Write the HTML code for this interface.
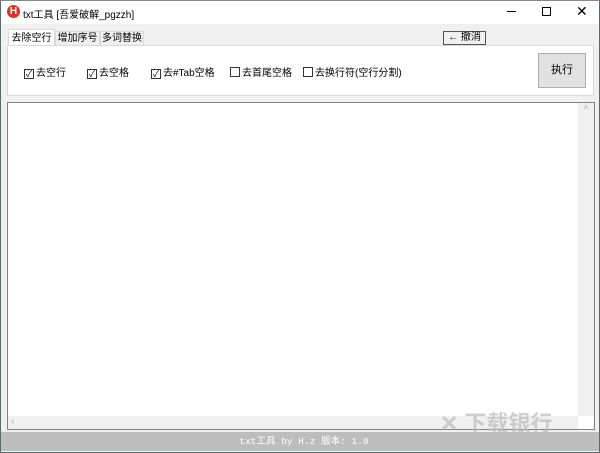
<!DOCTYPE html><html><head><meta charset="utf-8"><style>
*{margin:0;padding:0;box-sizing:border-box}
body{width:600px;height:453px;overflow:hidden;background:#f0f0f0;font-family:"Liberation Sans","Noto Sans CJK SC",sans-serif;font-size:10px;color:#000;position:relative}
.a{position:absolute;white-space:nowrap}
.cb{display:inline-block;width:10px;height:10px;border:1px solid #333;vertical-align:-1px;margin-right:2px;font-size:9px;line-height:8px;text-align:center}
</style></head><body>
<div class="a" style="left:0;top:0;width:600px;height:453px;border:1px solid #5a6a6a;border-top-color:#888"></div>
<div class="a" style="left:1px;top:1px;width:598px;height:23px;background:#fff"></div>
<div class="a" style="left:7px;top:5px;width:13px;height:13px;border-radius:50%;background:#d9342b;color:#fff;font-weight:bold;font-size:10px;text-align:center;line-height:13px">H</div>
<div class="a" style="left:23px;top:6px;font-size:10px">txt工具 [吾爱破解_pgzzh]</div>
<div class="a" style="left:507px;top:11px;width:9px;height:1px;background:#000"></div>
<div class="a" style="left:542px;top:7px;width:9px;height:9px;border:1px solid #000"></div>
<div class="a" style="left:576px;top:3px;font-size:14px">✕</div>
<div class="a" style="left:8px;top:29px;width:47px;height:17px;background:#fff;border:1px solid #d9d9d9;border-bottom:none;text-align:center;line-height:17px">去除空行</div>
<div class="a" style="left:55px;top:31px;width:45px;height:15px;border:1px solid #d9d9d9;text-align:center;line-height:14px">增加序号</div>
<div class="a" style="left:100px;top:31px;width:44px;height:15px;border:1px solid #d9d9d9;text-align:center;line-height:14px">多词替换</div>
<div class="a" style="left:443px;top:31px;width:43px;height:14px;border:1px solid #555;background:#f0f0f0;text-align:center;line-height:12px;font-size:10px">← 撤消</div>
<div class="a" style="left:7px;top:45px;width:587px;height:51px;background:#fff;border:1px solid #d9d9d9"></div>
<div class="a" style="left:24px;top:64px"><span class="cb">✓</span>去空行</div>
<div class="a" style="left:87px;top:64px"><span class="cb">✓</span>去空格</div>
<div class="a" style="left:151px;top:64px"><span class="cb">✓</span>去#Tab空格</div>
<div class="a" style="left:230px;top:64px"><span class="cb"></span>去首尾空格</div>
<div class="a" style="left:303px;top:64px"><span class="cb"></span>去换行符(空行分割)</div>
<div class="a" style="left:538px;top:53px;width:48px;height:35px;background:#e1e1e1;border:1px solid #adadad;text-align:center;line-height:33px;font-size:11px">执行</div>
<div class="a" style="left:7px;top:102px;width:588px;height:328px;background:#fff;border:1px solid #828282"></div>
<div class="a" style="left:578px;top:103px;width:16px;height:313px;background:#f0f0f0;color:#aaa;font-size:8px;text-align:center">˄</div>
<div class="a" style="left:8px;top:416px;width:570px;height:13px;background:#f0f0f0;color:#aaa;padding-left:3px;line-height:12px">‹</div>
<div class="a" style="left:1px;top:432px;width:598px;height:19px;background:#bdbdbd;color:#fff;text-align:center;line-height:19px;font-family:'Liberation Mono','Noto Sans CJK SC',monospace;font-size:9.5px;padding-left:8px">txt工具 by H.z  版本: 1.0</div>
<div class="a" style="left:440px;top:406px;color:#bbb;font-size:22px;font-weight:bold;opacity:.7">✕ 下载银行</div>
</body></html>
